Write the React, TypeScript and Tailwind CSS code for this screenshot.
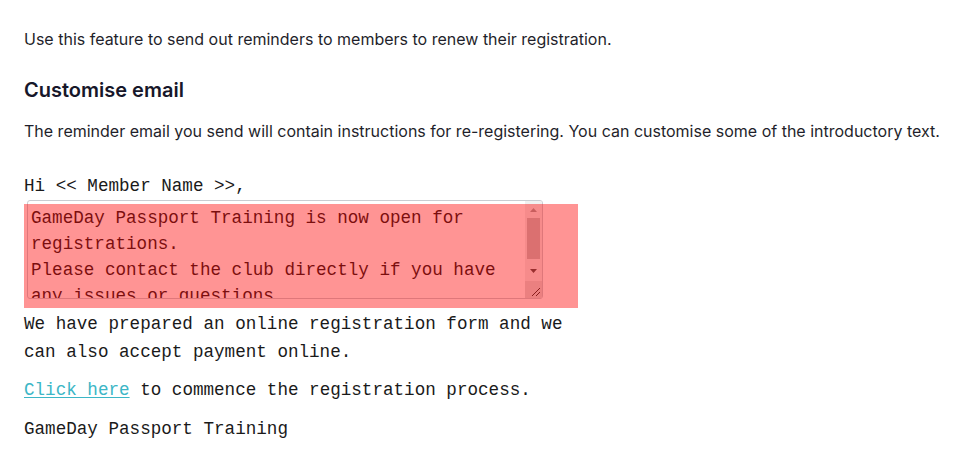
export default function App() {
  return (
    <div className="min-h-screen bg-white px-6 pt-[27px] font-['Inter',sans-serif] text-[#1f1f2b]">
      <p className="text-[16px] leading-6">
        Use this feature to send out reminders to members to renew their registration.
      </p>

      <h2 className="mt-[25px] text-[20px] font-semibold leading-7 text-[#17172a]">Customise email</h2>

      <p className="mt-[15px] text-[16px] leading-6">
        The reminder email you send will contain instructions for re-registering. You can customise some of the
        introductory text.
      </p>

      {/* Email preview */}
      <div className="mt-[30px] w-[555px] font-['Liberation_Mono','Courier_New',monospace] text-[17.6px] text-[#1a1a1a]">
        <div className="leading-[26px]">Hi &lt;&lt; Member Name &gt;&gt;,</div>

        <div className="relative mt-[1px]">
          <div className="ml-[3px] flex h-[99px] w-[516px] overflow-hidden rounded-[3px] border border-[#c9cdd2] bg-white">
            <div className="flex-1 overflow-hidden pl-[3px] pr-[6px] pt-[4px] leading-[26px]">
              <div>GameDay Passport Training is now open for registrations.</div>
              <div>Please contact the club directly if you have any issues or questions.</div>
            </div>
            {/* scrollbar */}
            <div className="flex w-[17px] flex-col bg-[#f0f0f0]">
              <div className="flex h-[17px] items-center justify-center">
                <svg width="7" height="4" viewBox="0 0 7 4">
                  <path d="M0 4 L3.5 0 L7 4 Z" fill="#a3a3a3" />
                </svg>
              </div>
              <div className="mx-[2px] h-[41px] bg-[#c1c1c1]" />
              <div className="flex h-[22px] items-center justify-center pt-[2px]">
                <svg width="7" height="4" viewBox="0 0 7 4">
                  <path d="M0 0 L7 0 L3.5 4 Z" fill="#505050" />
                </svg>
              </div>
              <div className="flex-1 bg-[#dcdcdc]">
                <svg width="17" height="17" viewBox="0 0 17 17">
                  <path d="M7 15 L15 7 M11 15 L15 11" stroke="#333" strokeWidth="1" />
                </svg>
              </div>
            </div>
          </div>
          {/* highlight overlay */}
          <div className="absolute left-0 top-[4px] h-[104px] w-[554px] bg-[rgba(255,0,0,0.42)]" />
        </div>

        <p className="mt-[11px] leading-[28px]">
          We have prepared an online registration form and we can also accept payment online.
        </p>

        <p className="mt-[10px] leading-[28px]">
          <a href="#" className="text-[#3cb6c6] underline underline-offset-2">
            Click here
          </a>{" "}
          to commence the registration process.
        </p>

        <p className="mt-[11px] leading-[28px]">GameDay Passport Training</p>
      </div>
    </div>
  );
}
